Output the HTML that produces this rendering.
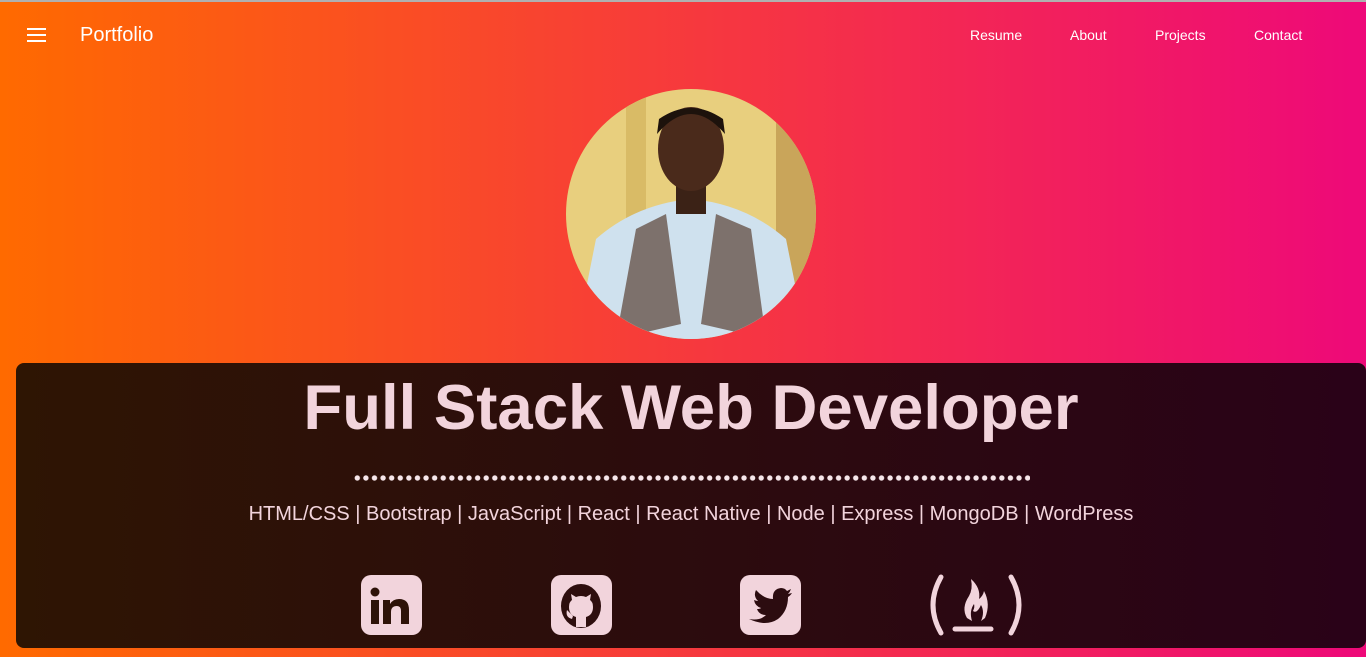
<!DOCTYPE html>
<html><head><style>
*{margin:0;padding:0;box-sizing:border-box}
body{width:1366px;height:657px;overflow:hidden;font-family:"Liberation Sans",Arial,sans-serif;background:linear-gradient(90deg,#ff6a00,#ee0979);position:relative}
.top{position:absolute;top:0;left:0;width:100%;height:2px;background:#b0b0b0}
.ham{position:absolute;left:27px;top:28px;width:19px}
.ham i{display:block;height:2px;background:#fff;margin-bottom:4px}
.brand{position:absolute;left:80px;top:24px;color:#fff;font-size:20px}
.nav a{position:absolute;top:27px;color:#fff;font-size:14px;text-decoration:none}
.card{position:absolute;left:16px;top:363px;width:1350px;height:285px;border-radius:8px;background:linear-gradient(90deg,#2e1503,#2a0218)}
h1{position:absolute;left:0;width:1382px;top:372px;text-align:center;color:#f2d4dc;font-size:63.5px;font-weight:bold}
.dots{position:absolute;left:353px;top:475px;width:677px;height:6px;background:radial-gradient(circle,#f6e6ea 2.4px,transparent 2.9px) 0 0/8.6px 6px repeat-x}
.sk{position:absolute;left:0;width:1382px;top:503px;text-align:center;color:#f2d4dc;font-size:20px}
.ic{position:absolute;top:575px;width:61px;height:60px;border-radius:10px;background:#f2d4dc}
</style></head><body>
<div class="top"></div>
<div class="ham"><i></i><i></i><i></i></div>
<div class="brand">Portfolio</div>
<div class="nav"><a style="left:970px">Resume</a><a style="left:1070px">About</a><a style="left:1155px">Projects</a><a style="left:1254px">Contact</a></div>
<svg style="position:absolute;left:566px;top:89px" width="250" height="250" viewBox="0 0 250 250">
<defs><clipPath id="c"><circle cx="125" cy="125" r="125"/></clipPath></defs>
<g clip-path="url(#c)">
<rect width="250" height="250" fill="#e8cf7e"/>
<rect x="60" width="20" height="250" fill="#d9bb66"/>
<rect x="210" width="40" height="250" fill="#c9a55a"/>
<path d="M10 250 L30 150 Q70 115 125 110 Q180 115 220 150 L240 250Z" fill="#cfe1ee"/>
<path d="M50 250 L70 140 L100 125 L115 235 Z M200 250 L185 140 L150 125 L135 235Z" fill="#7d716c"/>
<rect x="110" y="90" width="30" height="35" fill="#3b2216"/>
<ellipse cx="125" cy="60" rx="33" ry="42" fill="#4a2a1b"/>
<path d="M91 45 Q125 5 159 45 L157 30 Q125 8 93 30Z" fill="#1d120c"/>
</g></svg>
<div class="card"></div>
<h1>Full Stack Web Developer</h1>
<div class="dots"></div>
<div class="sk">HTML/CSS | Bootstrap | JavaScript | React | React Native | Node | Express | MongoDB | WordPress</div>
<div class="ic" style="left:361px"><svg width="61" height="60"><circle cx="14" cy="17" r="4.5" fill="#2e1208"/><rect x="10" y="25" width="8" height="24" fill="#2e1208"/><path d="M22 25h7v4q3-5 9-5 10 0 10 11v14h-8v-13q0-5-4-5-6 0-6 6v12h-8z" fill="#2e1208"/></svg></div>
<div class="ic" style="left:551px"><svg width="61" height="60"><ellipse cx="30" cy="31" rx="20" ry="22" fill="#2e0e0e"/><path d="M21 44 Q14 42 16 35 Q19 38 22 41 M25 52 L25 42 Q18 40 18 32 Q18 27 21 25 L20 19 L25 22 Q30 20 35 22 L40 19 L39 25 Q42 27 42 32 Q42 40 35 42 L35 52 Z" fill="#f2d4dc"/></svg></div>
<div class="ic" style="left:740px"><svg width="61" height="60"><path d="M9 44 Q20 46 26 40 Q19 40 17 34 Q20 34 21 33 Q15 31 14 25 Q17 26 18 26 Q13 21 16 15 Q24 24 33 24 Q32 14 41 13 Q45 13 47 16 L51 14 Q50 17 48 19 L52 18 Q50 21 48 22 Q48 36 38 44 Q26 52 9 44Z" fill="#2c0c10"/></svg></div>
<svg style="position:absolute;left:929px;top:574px" width="94" height="62" viewBox="0 0 94 62"><g fill="none" stroke="#f2d4dc" stroke-width="5" stroke-linecap="round"><path d="M12 3 Q-4 31 12 59"/><path d="M82 3 Q98 31 82 59"/><path d="M26 55 L62 55"/></g><path d="M42 5 Q52 14 50 25 Q54 22 55 17 Q62 30 56 44 L52 47 Q56 38 52 31 Q48 40 44 37 Q46 33 45 30 Q40 37 43 47 L38 44 Q32 34 40 22 Q44 15 42 5Z" fill="#f2d4dc"/></svg>
</body></html>
